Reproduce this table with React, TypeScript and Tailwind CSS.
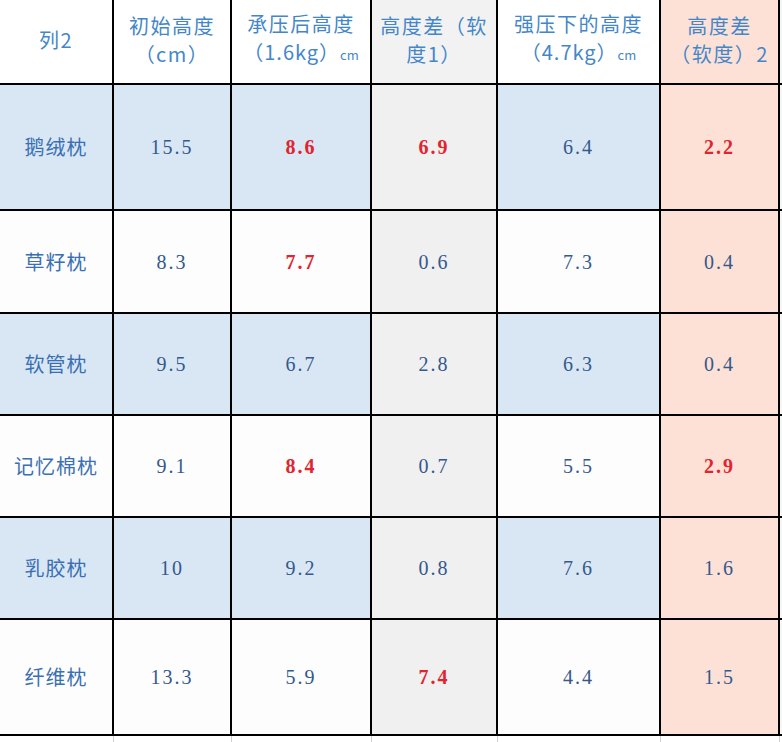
import React from 'react';

type Cell = { v: string; red?: boolean };

const rows: { name: string; cells: Cell[]; blue: boolean; h: string }[] = [
  { name: '鹅绒枕', blue: true, h: 'h-[126px]', cells: [{ v: '15.5' }, { v: '8.6', red: true }, { v: '6.9', red: true }, { v: '6.4' }, { v: '2.2', red: true }] },
  { name: '草籽枕', blue: false, h: 'h-[103px]', cells: [{ v: '8.3' }, { v: '7.7', red: true }, { v: '0.6' }, { v: '7.3' }, { v: '0.4' }] },
  { name: '软管枕', blue: true, h: 'h-[102px]', cells: [{ v: '9.5' }, { v: '6.7' }, { v: '2.8' }, { v: '6.3' }, { v: '0.4' }] },
  { name: '记忆棉枕', blue: false, h: 'h-[102px]', cells: [{ v: '9.1' }, { v: '8.4', red: true }, { v: '0.7' }, { v: '5.5' }, { v: '2.9', red: true }] },
  { name: '乳胶枕', blue: true, h: 'h-[102px]', cells: [{ v: '10' }, { v: '9.2' }, { v: '0.8' }, { v: '7.6' }, { v: '1.6' }] },
  { name: '纤维枕', blue: false, h: 'h-[116px]', cells: [{ v: '13.3' }, { v: '5.9' }, { v: '7.4', red: true }, { v: '4.4' }, { v: '1.5' }] },
];

const widths = ['w-[114px]', 'w-[118px]', 'w-[140px]', 'w-[126px]', 'w-[163px]', 'w-[119px]'];

const cjk = "font-['Noto_Sans_CJK_SC','Noto_Sans',sans-serif]";
const num = "font-['Liberation_Serif','Noto_Sans_CJK_SC',serif]";

function bgFor(col: number, blue: boolean) {
  if (col === 3) return 'bg-[#f1f0f1]';
  if (col === 5) return 'bg-[#fde1d6]';
  return blue ? 'bg-[#d9e7f5]' : 'bg-[#fefdfe]';
}

function Head({ col, children }: { col: number; children: React.ReactNode }) {
  const bg = col === 3 ? 'bg-[#f3f2f3]' : col === 5 ? 'bg-[#fde1d6]' : 'bg-white';
  return (
    <div className={`${widths[col]} ${bg} h-full shrink-0 border-r-2 border-black flex items-center justify-center text-center ${cjk} text-[20px] leading-[28px] tracking-[1.5px] text-[#4487c9] pb-[4px]`}>
      <div>{children}</div>
    </div>
  );
}

export default function App() {
  return (
    <div className="w-[782px] h-[742px] bg-white overflow-hidden">
      <div className="flex h-[85px] border-b-2 border-black">
        <Head col={0}>列2</Head>
        <Head col={1}>
          初始高度
          <br />
          （cm）
        </Head>
        <Head col={2}>
          承压后高度
          <br />
          <span className="tracking-[1px]">（1.6kg）</span>
          <span className="text-[13px] tracking-normal">cm</span>
        </Head>
        <Head col={3}>
          高度差（软
          <br />
          度1）
        </Head>
        <Head col={4}>
          强压下的高度
          <br />
          <span className="tracking-[1px]">（4.7kg）</span>
          <span className="text-[13px] tracking-normal">cm</span>
        </Head>
        <Head col={5}>
          高度差
          <br />
          （软度）2
        </Head>
        <div className="flex-1 bg-[#f6f5f6]" />
      </div>

      {rows.map(row => (
        <div key={row.name} className={`flex ${row.h} border-b-2 border-black`}>
          <div className={`${widths[0]} ${bgFor(0, row.blue)} shrink-0 border-r-2 border-black flex items-center justify-center ${cjk} text-[20px] tracking-[1px] text-[#3a70b3]`}>
            {row.name}
          </div>
          {row.cells.map((c, i) => (
            <div
              key={i}
              className={`${widths[i + 1]} ${bgFor(i + 1, row.blue)} shrink-0 border-r-2 border-black flex items-center justify-center ${num} text-[20px] tracking-[2px] ${c.red ? 'text-[#e0252f] font-bold' : 'text-[#34598c]'}`}
            >
              {c.v}
            </div>
          ))}
          <div className="flex-1 bg-[#f7f6f7]" />
        </div>
      ))}

      <div className="flex h-[10px]">
        {widths.map(w => (
          <div key={w} className={`${w} shrink-0 border-r border-[#cfcfcf] bg-white`} />
        ))}
        <div className="flex-1 bg-white" />
      </div>
    </div>
  );
}
